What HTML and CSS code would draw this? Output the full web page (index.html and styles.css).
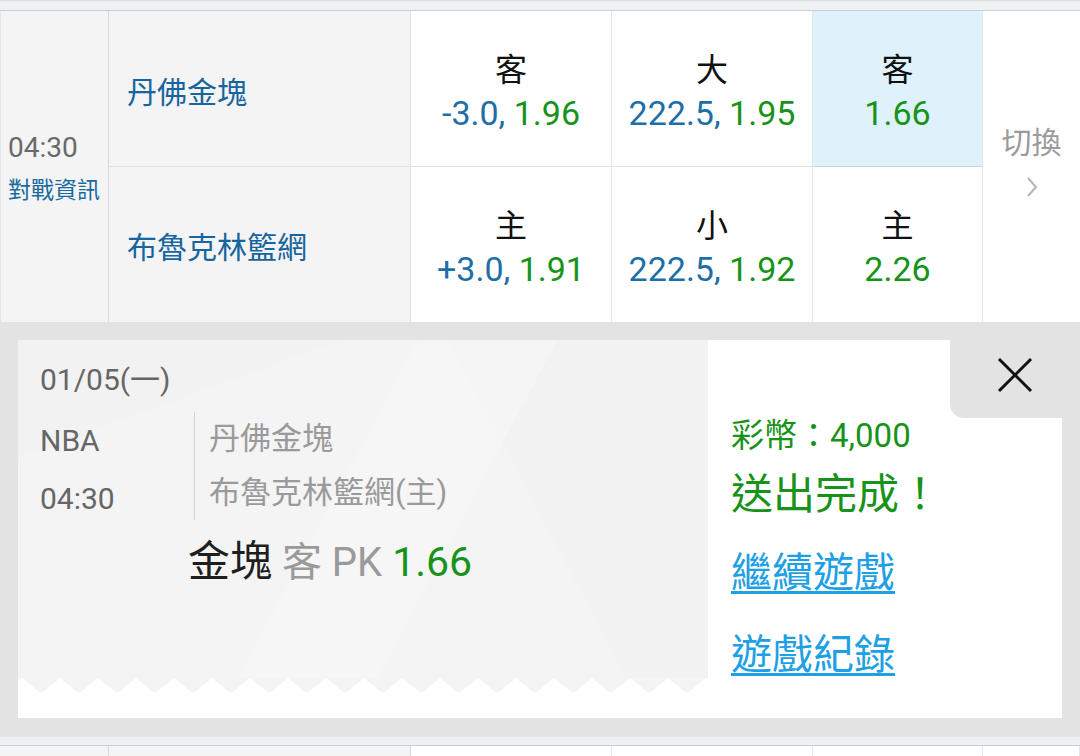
FILE: index.html
```html
<!DOCTYPE html>
<html lang="zh-Hant">
<head>
<meta charset="utf-8">
<title>投注完成</title>
<link rel="stylesheet" href="styles.css">
</head>
<body>
<div class="page">
  <div class="strip strip-top"></div>

  <div class="match">
    <div class="c-time">
      <div class="time">04:30</div>
      <div class="info">對戰資訊</div>
    </div>
    <div class="c-team r1">丹佛金塊</div>
    <div class="c-odd r1">
      <div class="lbl">客</div>
      <div class="val"><span class="b">-3.0,</span> <span class="g">1.96</span></div>
    </div>
    <div class="c-odd r1">
      <div class="lbl">大</div>
      <div class="val"><span class="b">222.5,</span> <span class="g">1.95</span></div>
    </div>
    <div class="c-odd r1 last sel">
      <div class="lbl">客</div>
      <div class="val"><span class="g">1.66</span></div>
    </div>
    <div class="c-switch">
      <div class="sw-text">切換</div>
      <svg class="chev" width="14" height="24" viewBox="0 0 14 24"><polyline points="3,3 11,12 3,21" fill="none" stroke="#b5b5b5" stroke-width="2"/></svg>
    </div>
    <div class="c-team">布魯克林籃網</div>
    <div class="c-odd">
      <div class="lbl">主</div>
      <div class="val"><span class="b">+3.0,</span> <span class="g">1.91</span></div>
    </div>
    <div class="c-odd">
      <div class="lbl">小</div>
      <div class="val"><span class="b">222.5,</span> <span class="g">1.92</span></div>
    </div>
    <div class="c-odd last">
      <div class="lbl">主</div>
      <div class="val"><span class="g">2.26</span></div>
    </div>
  </div>

  <div class="overlay">
    <div class="ticket">
      <div class="tk-left">
        <div class="tk-body">
          <div class="tk-date">01/05(一)</div>
          <div class="tk-info">
            <div class="tk-meta">
              <div>NBA</div>
              <div>04:30</div>
            </div>
            <div class="tk-teams">
              <div>丹佛金塊</div>
              <div>布魯克林籃網(主)</div>
            </div>
          </div>
          <div class="tk-pick"><span class="pk-team">金塊</span> <span class="pk-gray">客 PK</span> <span class="pk-odd">1.66</span></div>
        </div>
        <svg class="zigzag" width="690" height="15" viewBox="0 0 690 15">
          <defs>
            <pattern id="zz" width="38" height="15" patternUnits="userSpaceOnUse" x="4">
              <path d="M0 0 H38 L22 13 Q19 15.5 16 13 Z" fill="#f4f4f4"/>
            </pattern>
          </defs>
          <rect width="690" height="15" fill="url(#zz)"/>
        </svg>
      </div>
      <div class="tk-right">
        <div class="coins">彩幣：4,000</div>
        <div class="done">送出完成！</div>
        <a class="link first" href="#">繼續遊戲</a>
        <a class="link" href="#">遊戲紀錄</a>
      </div>
    </div>
    <div class="close">
      <svg width="38" height="38" viewBox="0 0 38 38"><path d="M3 3 L35 35 M35 3 L3 35" stroke="#111" stroke-width="3" fill="none"/></svg>
    </div>
  </div>

  <div class="strip strip-bottom"></div>
  <div class="match next">
    <div class="n-cell grey"></div>
    <div class="n-cell grey"></div>
    <div class="n-cell"></div>
    <div class="n-cell"></div>
    <div class="n-cell"></div>
    <div class="n-cell"></div>
  </div>
</div>
</body>
</html>
```

FILE: styles.css
```css
* { box-sizing: border-box; }
html, body { margin: 0; padding: 0; }
body {
  width: 1080px;
  height: 756px;
  overflow: hidden;
  background: #ffffff;
  font-family: Roboto, "Noto Sans CJK TC", sans-serif;
}
.page { width: 1080px; height: 756px; overflow: hidden; }

.strip { background: #eef0f2; }
.strip-top {
  height: 11px;
  border-top: 1px solid #d5dee5;
  border-bottom: 1px solid #c4d1dc;
}
.strip-bottom {
  height: 9px;
  border-bottom: 1px solid #c4d1dc;
}

.match {
  display: grid;
  grid-template-columns: 109px 302px 201px 201px 170px 97px;
  grid-template-rows: 156px 155px;
}
.c-time {
  grid-row: span 2;
  background: #f4f4f4;
  border-right: 1px solid #d3dadf;
  border-left: 1px solid #e2e6ea;
  display: flex;
  flex-direction: column;
  justify-content: center;
  padding-left: 7px;
  padding-top: 4px;
}
.time { font-size: 28px; line-height: 36px; color: #6a6a6a; }
.info { font-size: 23px; line-height: 34px; color: #1a6aa2; margin-top: 8px; }

.c-team {
  background: #f4f4f4;
  border-right: 1px solid #dde2e6;
  display: flex;
  align-items: center;
  padding-left: 18px;
  padding-top: 0;
  font-size: 30px;
  color: #16659e;
}
.r1 { border-bottom: 1px solid #dbe1e6; }
.c-team.r1 { padding-top: 2px; }

.c-odd {
  background: #ffffff;
  border-right: 1px solid #e3e6e9;
  display: flex;
  flex-direction: column;
  align-items: center;
  justify-content: center;
  padding-top: 8px;
  text-align: center;
}
.c-odd.sel { background: #dff2fb; border-bottom-color: #bfdbea; }
.lbl { font-size: 32px; line-height: 40px; color: #111; }
.val { font-size: 34px; line-height: 46px; white-space: nowrap; }
.b { color: #1d6fa8; }
.g { color: #17931a; }

.c-switch {
  grid-row: span 2;
  background: #ffffff;
  display: flex;
  flex-direction: column;
  align-items: center;
  justify-content: center;
  padding-bottom: 12px;
}
.sw-text { font-size: 30px; line-height: 40px; color: #9b9b9b; }
.chev { margin-top: 12px; }

.overlay {
  position: relative;
  height: 415px;
  background: #e3e3e3;
  padding: 18px 18px 0 18px;
}
.ticket {
  display: flex;
  height: 378px;
  background: #ffffff;
}
.tk-left {
  width: 690px;
  display: flex;
  flex-direction: column;
  background: #ffffff;
}
.tk-body {
  height: 338px;
  background:
    linear-gradient(118deg, rgba(255,255,255,0) 46%, rgba(255,255,255,0.22) 46%, rgba(255,255,255,0.22) 62%, rgba(255,255,255,0) 62%),
    linear-gradient(62deg, rgba(0,0,0,0) 70%, rgba(0,0,0,0.008) 70%),
    linear-gradient(160deg, rgba(0,0,0,0.008) 20%, rgba(0,0,0,0) 20%),
    #f4f4f4;
  padding: 22px 0 0 22px;
}
.zigzag { display: block; }
.tk-date { font-size: 30px; line-height: 36px; color: #666; }
.tk-info { display: flex; margin-top: 14px; height: 108px; }
.tk-meta {
  width: 154px;
  font-size: 30px;
  line-height: 58px;
  color: #666;
}
.tk-teams {
  border-left: 1px solid #d6d6d6;
  padding-left: 14px;
  font-size: 31px;
  line-height: 54px;
  color: #9a9a9a;
}
.tk-pick {
  margin-top: 18px;
  margin-left: 148px;
  font-size: 40px;
  line-height: 48px;
  white-space: nowrap;
}
.pk-team { color: #1e1e1e; font-size: 42px; }
.pk-gray { color: #9a9a9a; }
.pk-odd { color: #17931a; font-size: 41px; }

.tk-right {
  flex: 1;
  background: #ffffff;
  padding: 78px 0 0 23px;
  display: flex;
  flex-direction: column;
  align-items: flex-start;
}
.coins { font-size: 33px; line-height: 36px; color: #17931a; }
.done { font-size: 42px; line-height: 56px; color: #17931a; margin-top: 13px; }
.link {
  font-size: 41px;
  line-height: 56px;
  color: #1ea0e4;
  text-decoration: underline;
  text-decoration-thickness: 3px;
  text-underline-offset: 4px;
  margin-top: 26px;
}
.link.first { margin-top: 22px; }

.close {
  position: absolute;
  top: 0;
  right: 0;
  width: 130px;
  height: 96px;
  background: #e3e3e3;
  border-bottom-left-radius: 14px;
  display: flex;
  justify-content: center;
  align-items: flex-start;
  padding-top: 34px;
}

.match.next { grid-template-rows: 20px; }
.n-cell { background: #ffffff; border-right: 1px solid #e3e6e9; }
.n-cell.grey { background: #f4f4f4; border-right-color: #d3dadf; }
```
